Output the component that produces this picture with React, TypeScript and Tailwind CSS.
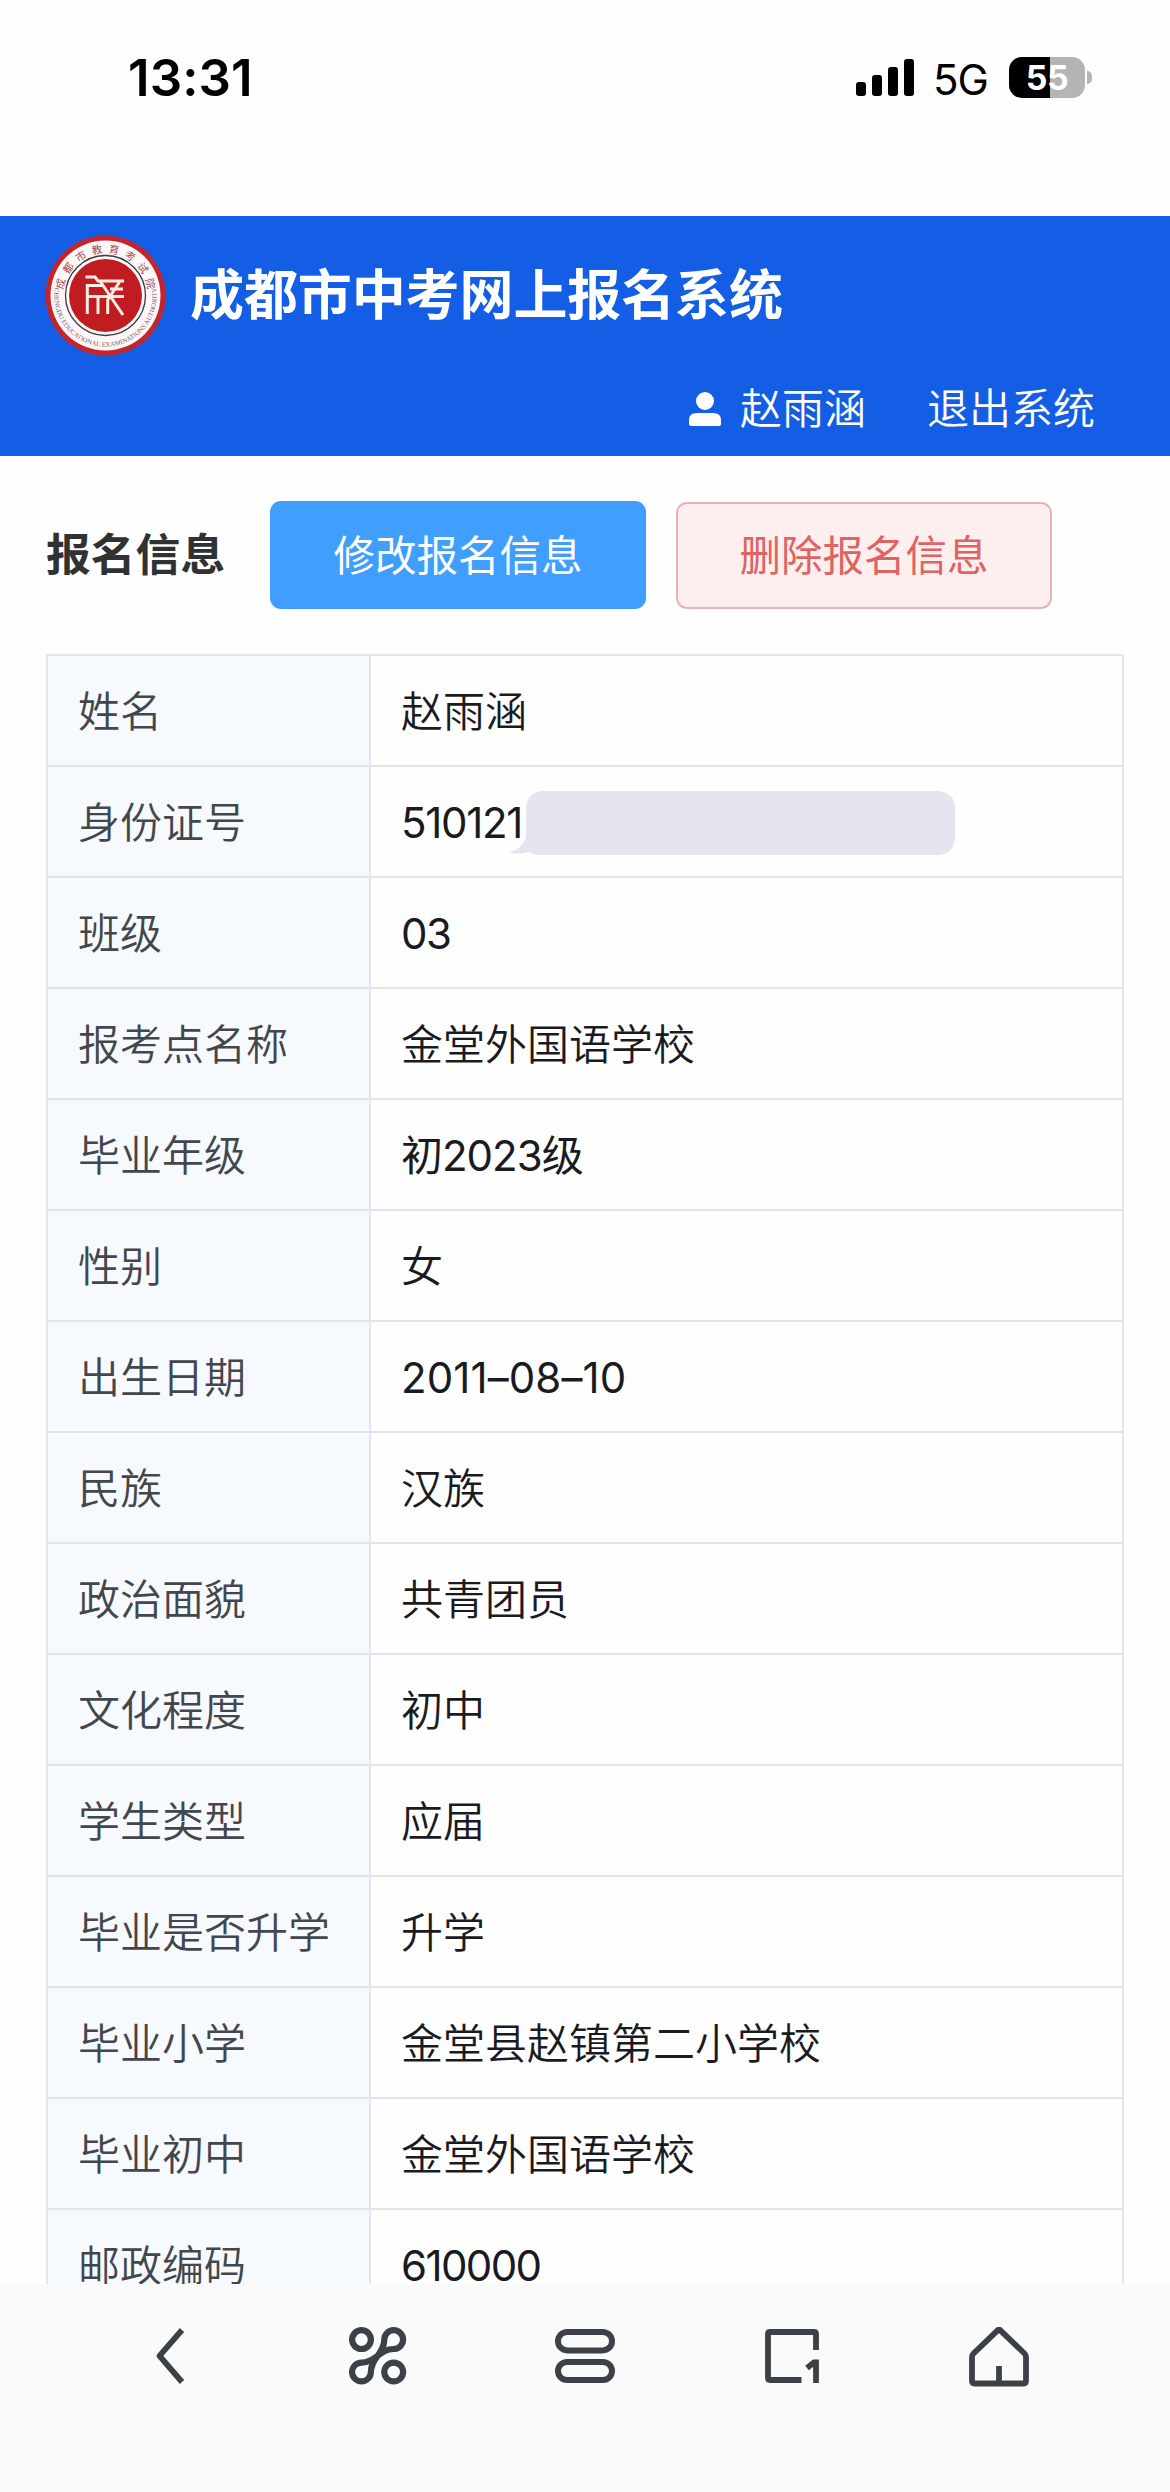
import React from 'react';

type Row = {
  label: string;
  value: string;
  tracking?: string;
  masked?: boolean;
};

const rows: Row[] = [
  { label: '姓名', value: '赵雨涵' },
  { label: '身份证号', value: '510121', tracking: 'font-normal tracking-[-1.3px]', masked: true },
  { label: '班级', value: '03', tracking: 'font-normal tracking-[-1.6px]' },
  { label: '报考点名称', value: '金堂外国语学校' },
  { label: '毕业年级', value: '初2023级', tracking: 'font-normal tracking-[-1px]' },
  { label: '性别', value: '女' },
  { label: '出生日期', value: '2011–08–10', tracking: 'font-normal tracking-[0.1px]' },
  { label: '民族', value: '汉族' },
  { label: '政治面貌', value: '共青团员' },
  { label: '文化程度', value: '初中' },
  { label: '学生类型', value: '应届' },
  { label: '毕业是否升学', value: '升学' },
  { label: '毕业小学', value: '金堂县赵镇第二小学校' },
  { label: '毕业初中', value: '金堂外国语学校' },
  { label: '邮政编码', value: '610000', tracking: 'font-normal tracking-[-1.6px]' },
];

const StatusBar = () => (
  <div className="flex h-[216px] shrink-0 items-start justify-between pl-[128px] pr-[78px]">
    <span className="mt-[46px] text-[51px] font-semibold leading-[64px] tracking-[0.1px] text-black">13:31</span>
    <div className="mt-[57px] flex h-[41px] items-center">
      <svg className="h-[37px] w-[58px]" viewBox="0 0 58 37" fill="#000">
        <rect x="0" y="23" width="10" height="14" rx="3" />
        <rect x="16" y="16" width="10" height="21" rx="3" />
        <rect x="32" y="8" width="10" height="29" rx="3" />
        <rect x="48" y="0" width="10" height="37" rx="3" />
      </svg>
      <span className="ml-[19px] w-[55px] whitespace-nowrap pt-[4px] text-[42px] font-normal leading-[41px] tracking-[-1px] text-black">5G</span>
      <div className="ml-[21px] flex h-[41px] w-[76px] items-center justify-center rounded-[13px] bg-[linear-gradient(90deg,#000_54%,#b4b4b4_54%)]">
        <span className="text-[34px] font-bold leading-[41px] tracking-[-0.5px] text-white">55</span>
      </div>
      <div className="ml-[2px] h-[13px] w-[5px] rounded-r-full bg-[#b4b4b4]" />
    </div>
  </div>
);

const Emblem = () => (
  <svg className="h-[121px] w-[121px]" viewBox="0 0 121 121">
    <defs>
      <path id="emblem-top" d="M18.8 67.9 A42.4 42.4 0 1 1 102.2 67.9" />
      <path id="emblem-bottom" d="M10.6 49 A51.2 51.2 0 1 0 110.4 49" />
    </defs>
    <circle cx="60.5" cy="60.5" r="60" fill="#c4252d" />
    <circle cx="60.5" cy="60.5" r="55" fill="#fdf8f8" />
    <circle cx="60.5" cy="60.5" r="40" fill="none" stroke="#3a3a42" strokeWidth="1.3" />
    <circle cx="60.5" cy="60.5" r="36.5" fill="#c01c22" />
    <text fill="#a5484c" fontSize="10.5" fontFamily="'Noto Sans CJK SC', sans-serif">
      <textPath href="#emblem-top" startOffset="50%" textAnchor="middle" textLength="122">成都市教育考试院</textPath>
    </text>
    <text fill="#7d5560" fontSize="6.6" fontFamily="'Liberation Serif', serif">
      <textPath href="#emblem-bottom" startOffset="50%" textAnchor="middle" textLength="176">CHENGDU EDUCATIONAL EXAMINATIONS AUTHORITY</textPath>
    </text>
    <g fill="none" stroke="#f9eee2" strokeWidth="3">
      <path d="M40.5 42H50L53 46H79" />
      <path d="M42.3 79V50.5H57" />
      <path d="M65 54H78" />
      <path d="M42 61.5H79" />
      <path d="M53 61V79" />
      <path d="M55 46L78 80" />
      <path d="M74.500 47L62.700 65V79" />
    </g>
  </svg>
);

const Header = () => (
  <header className="flex h-[240px] shrink-0 flex-col bg-[#135ee4] text-white">
    <div className="flex items-center pl-[45px] pt-[19px]">
      <Emblem />
      <h1 className="ml-[24px] text-[54px] font-bold leading-[60px] tracking-[-0.1px]">成都市中考网上报名系统</h1>
    </div>
    <div className="mt-[22px] flex items-center justify-end pr-[75px] text-[42px] font-[350] leading-[60px]">
      <svg className="h-[34px] w-[32px]" viewBox="0 0 32 34" fill="#fff">
        <ellipse cx="16" cy="9" rx="9" ry="9" />
        <path d="M0 32V28Q0 21 8 21H24Q32 21 32 28V32Q32 34 30 34H2Q0 34 0 32Z" />
      </svg>
      <span className="ml-[19px] pt-px">赵雨涵</span>
      <span className="ml-[61px] pt-px">退出系统</span>
    </div>
  </header>
);

const Toolbar = () => (
  <div className="flex h-[198px] shrink-0 items-center pl-[46px]">
    <h2 className="w-[224px] text-[44.8px] font-bold leading-[60px] text-[#303133]">报名信息</h2>
    <button className="h-[108px] w-[376px] rounded-[11px] bg-[#409eff] pt-[3px] text-[41.5px] text-white">修改报名信息</button>
    <button className="ml-[30px] h-[107px] w-[376px] rounded-[11px] border-2 border-[#e6b4b4] bg-[#feefef] pt-[3px] text-[41.5px] text-[#de6464]">删除报名信息</button>
  </div>
);

// Bubble that covers the rest of the ID number
const Mask = () => (
  <svg className="-ml-[17px] h-[64px] w-[448px]" viewBox="0 0 448 64" fill="#e6e4ef">
    <path d="M34 0H432Q448 2 448 18V46Q448 62 432 64H34Q26 64 22 61Q12 64 2 62Q18 56 19 44V18Q20 2 34 0Z" />
  </svg>
);

const InfoTable = () => (
  <div className="ml-[46px] flex w-[1078px] flex-col border-x-2 border-t-2 border-[#e2e6f0] font-[350]">
    {rows.map((row) => (
      <div key={row.label} className="flex h-[111px] shrink-0 border-b-2 border-[#e1e4ea] text-[42px] leading-[60px]">
        <div className="flex w-[323px] shrink-0 items-center border-r-2 border-[#e0e6f3] bg-[#f6f9fe] pl-[30px] pt-[2px] text-[#43464b]">{row.label}</div>
        <div className="flex items-center whitespace-nowrap pl-[30px] pt-[2px] text-[#1a1b1f]">
          <span className={`${row.tracking ?? ''} ${row.masked ? 'w-[123px]' : ''}`}>{row.value}</span>
          {row.masked && <Mask />}
        </div>
      </div>
    ))}
  </div>
);

const TabBar = () => (
  <nav className="flex h-[208px] shrink-0 items-start bg-[#fafafb] pt-[41px] text-[#3c4148]">
    <svg className="ml-[153px] h-[64px] w-[32px]" viewBox="0 0 32 64" fill="none" stroke="currentColor" strokeWidth="5.8" strokeLinejoin="round">
      <path d="M29 5L6.5 30.8L29 57" />
    </svg>
    <svg className="ml-[164px] mt-[2px] h-[58px] w-[58px]" viewBox="0 0 58 58" fill="none" stroke="currentColor" strokeWidth="6.2">
      <circle cx="12.5" cy="12.6" r="9.4" />
      <circle cx="44.7" cy="45" r="9.4" />
      <path d="M35.3 12.6A9.4 9.4 0 1 1 44.7 22C30 22 27 35.6 12.5 35.6A9.4 9.4 0 1 0 21.9 45C21.9 30.6 35.3 27 35.3 12.6Z" />
    </svg>
    <svg className="ml-[148px] mt-[4px] h-[54px] w-[60px]" viewBox="0 0 60 54" fill="none" stroke="currentColor" strokeWidth="6">
      <rect x="3" y="3" width="54" height="18.4" rx="9.2" />
      <rect x="3" y="33" width="54" height="18" rx="9" />
    </svg>
    <svg className="ml-[150px] mt-[4px] h-[54px] w-[54px]" viewBox="0 0 54 54" fill="none" stroke="currentColor" strokeWidth="5.8">
      <path d="M51 21V5Q51 3 49 3H5Q3 3 3 5V49Q3 51 5 51H36.5" />
      <path d="M51 54V33.5H49L42 39" />
    </svg>
    <svg className="ml-[150px] mt-[2px] h-[60px] w-[60px]" viewBox="0 0 60 60" fill="none" stroke="currentColor" strokeWidth="5.8" strokeLinejoin="round">
      <path d="M28.4 3.6Q30 2 31.6 3.6L55.5 26.5Q57 28 57 30V54Q57 56.5 54.5 56.5H5.5Q3 56.5 3 54V30Q3 28 4.5 26.5Z" />
      <path d="M30 39V56" />
    </svg>
  </nav>
);

const App = () => {
  return (
    <div className="flex h-[2492px] w-[1170px] flex-col overflow-hidden bg-[#fefefe] font-[Inter,'Noto_Sans_CJK_SC',sans-serif]">
      <StatusBar />
      <Header />
      <Toolbar />
      <main className="min-h-0 flex-1 overflow-hidden">
        <InfoTable />
      </main>
      <TabBar />
    </div>
  );
};

export default App;
